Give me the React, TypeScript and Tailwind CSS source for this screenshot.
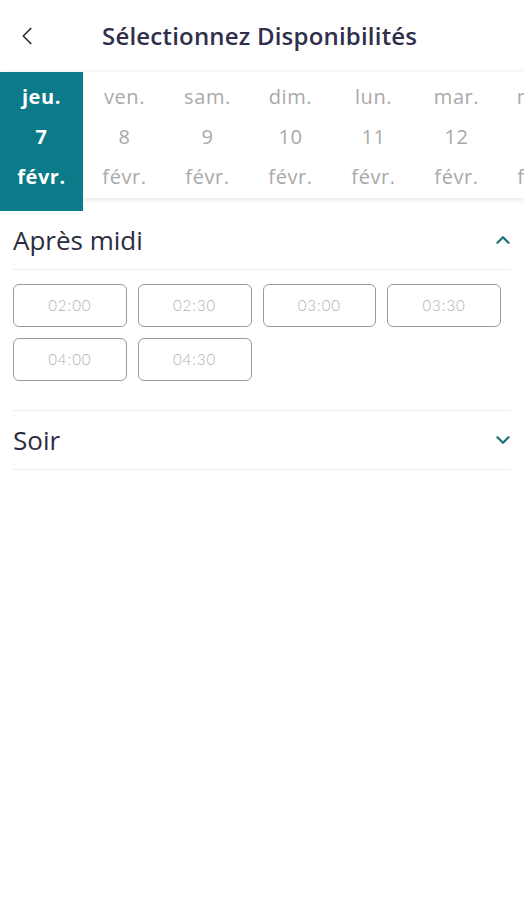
import { ChevronLeft, ChevronUp, ChevronDown } from "lucide-react";

const days = [
  { day: "jeu.", num: "7", month: "févr." },
  { day: "ven.", num: "8", month: "févr." },
  { day: "sam.", num: "9", month: "févr." },
  { day: "dim.", num: "10", month: "févr." },
  { day: "lun.", num: "11", month: "févr." },
  { day: "mar.", num: "12", month: "févr." },
  { day: "mer.", num: "13", month: "févr." },
];

const afternoon = ["02:00", "02:30", "03:00", "03:30", "04:00", "04:30"];

function DayCell({ d, selected }: { d: (typeof days)[number]; selected: boolean }) {
  return (
    <div
      className={
        selected
          ? "w-[83px] shrink-0 h-[139px] bg-[#0b7a89] text-white font-bold flex flex-col items-center pt-[12px] gap-[14px]"
          : "w-[83px] shrink-0 h-[126px] text-[#a9a9a9] flex flex-col items-center pt-[12px] gap-[14px]"
      }
    >
      <span className="leading-[26px]">{d.day}</span>
      <span className="leading-[26px]">{d.num}</span>
      <span className="leading-[26px]">{d.month}</span>
    </div>
  );
}

export default function App() {
  return (
    <div
      className="w-[524px] h-[900px] bg-white overflow-hidden"
      style={{ fontFamily: '"Open Sans", "Noto Sans", sans-serif' }}
    >
      <div className="h-[72px] flex items-center px-[12px]">
        <ChevronLeft className="w-[30px] h-[30px] text-[#333]" strokeWidth={1.4} />
        <h1 className="ml-[60px] text-[24px] font-semibold text-[#2f2f4b] tracking-[0.2px] mb-[1px]">
          Sélectionnez Disponibilités
        </h1>
      </div>

      <div className="h-[126px] bg-white shadow-[0_1px_5px_rgba(0,0,0,0.13)] flex items-start text-[20px] tracking-[0.6px]">
        {days.map((d, i) => (
          <DayCell key={i} d={d} selected={i === 0} />
        ))}
      </div>

      <div className="px-[13px] mt-[13px]">
        <div className="h-[59px] flex items-center justify-between border-b border-[#eeeeee]">
          <span className="text-[26px] text-[#2b2c40]">Après midi</span>
          <ChevronUp className="w-[22px] h-[22px] text-[#1f6f7c] mr-[-3px]" strokeWidth={2.5} />
        </div>
        <div className="grid grid-cols-4 gap-x-[11px] gap-y-[11px] pt-[14px] pb-[29px] w-[488px]">
          {afternoon.map((t) => (
            <div
              key={t}
              className="h-[43px] rounded-[6px] border border-[#9b9b9b] flex items-center justify-center text-[15px] font-light text-[#b0b0b0] tracking-[1px]"
              style={{ fontFamily: "Lato, sans-serif" }}
            >
              {t}
            </div>
          ))}
        </div>
        <div className="h-[60px] flex items-center justify-between border-y border-[#eeeeee]">
          <span className="text-[26px] text-[#2b2c40]">Soir</span>
          <ChevronDown className="w-[22px] h-[22px] text-[#1f6f7c] mr-[-3px]" strokeWidth={2.5} />
        </div>
      </div>
    </div>
  );
}
